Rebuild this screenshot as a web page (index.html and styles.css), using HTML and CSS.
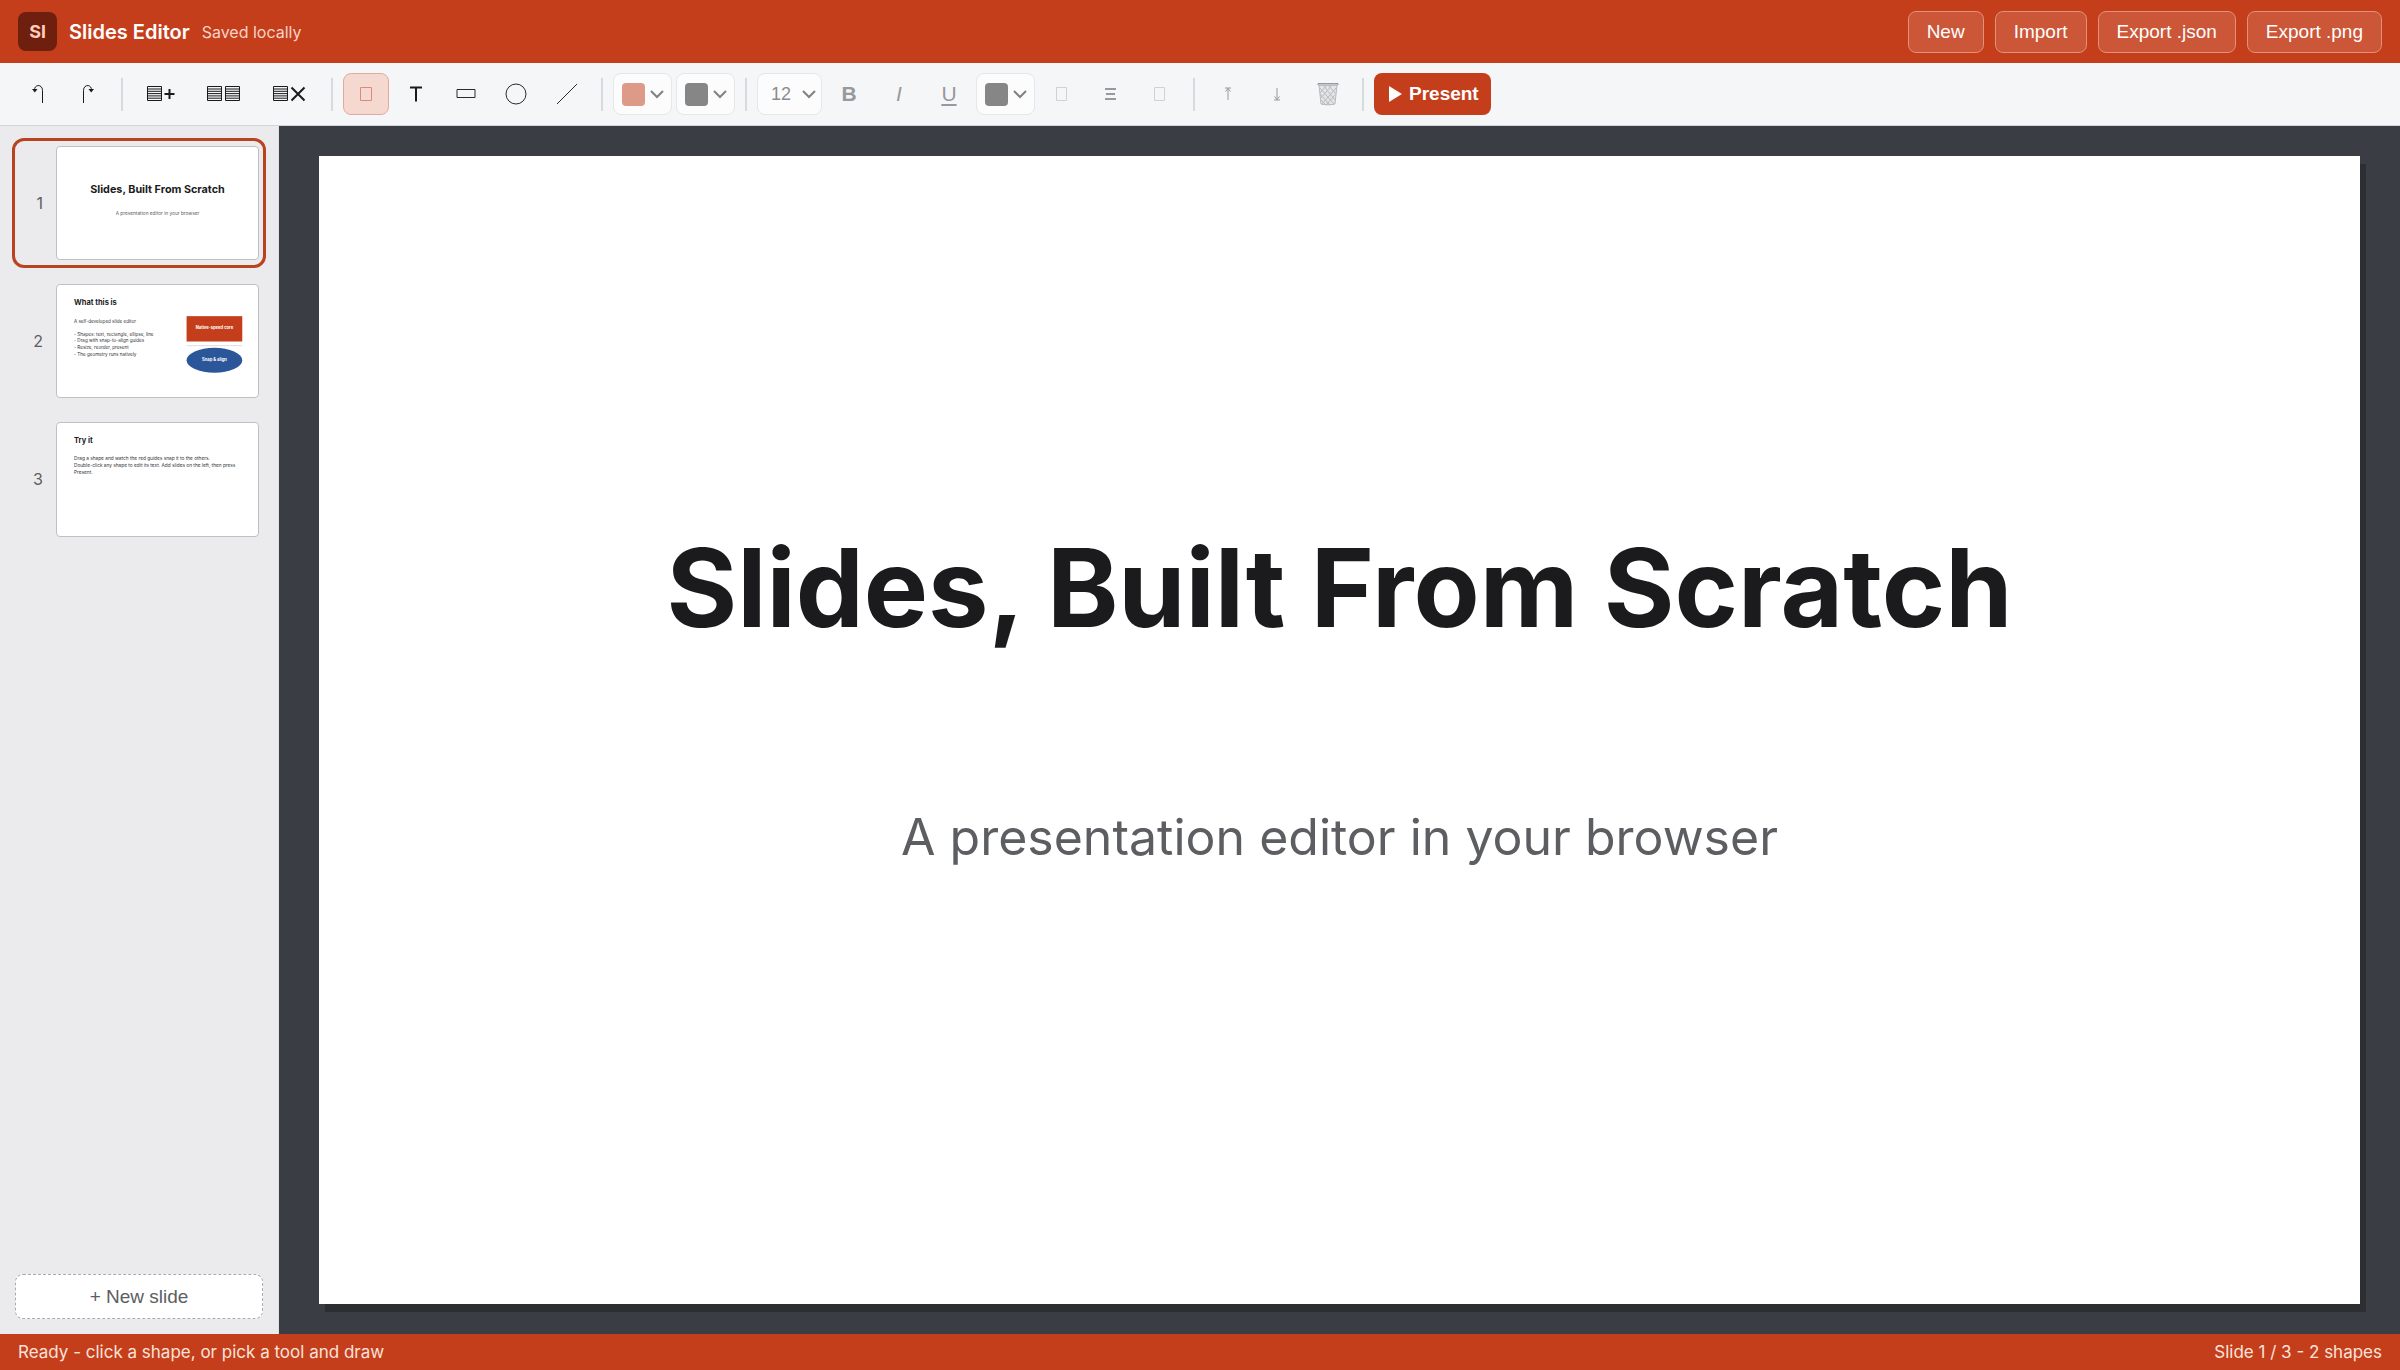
FILE: index.html
```html
<!DOCTYPE html>
<html lang="en">
<head>
<meta charset="utf-8">
<title>Slides Editor</title>
<link rel="stylesheet" href="styles.css">
</head>
<body>
<div class="app">
  <header class="topbar">
    <div class="logo">Sl</div>
    <h1 class="app-name">Slides Editor</h1>
    <span class="save-state">Saved locally</span>
    <div class="file-actions">
      <button class="file-btn" type="button">New</button>
      <button class="file-btn" type="button">Import</button>
      <button class="file-btn" type="button">Export .json</button>
      <button class="file-btn" type="button">Export .png</button>
    </div>
  </header>

  <div class="toolbar" role="toolbar" aria-label="Editing tools">
    <button class="tool" type="button" aria-label="Undo"><svg width="12" height="20" viewBox="0 0 12 20"><path d="M10.500 19V6.500C10.500 0 2.500 0 2.500 6" class="thin"/><path d="M0 5h5.500L2.800 8.500z" class="solid"/></svg></button>
    <button class="tool" type="button" aria-label="Redo"><svg width="12" height="20" viewBox="0 0 12 20"><path d="M1.500 19V6.500C1.500 0 9.500 0 9.500 6" class="thin"/><path d="M12 5H6.500L9.200 8.500z" class="solid"/></svg></button>
    <span class="sep"></span>
    <button class="tool tool-add" type="button" aria-label="Add slide"><svg width="28" height="16" viewBox="0 0 28 16"><path d="M.5 .5h14v14H.5zM.5 3h14M.5 5.300h14M.5 7.600h14M.5 9.900h14M.5 12.200h14" class="thin"/><path d="M17.500 8h10M22.500 3v10" class="bold-line"/></svg></button>
    <button class="tool tool-wide" type="button" aria-label="Duplicate slide"><svg width="34" height="16" viewBox="0 0 34 16"><path d="M.5 .5h14v14H.5zM.5 3h14M.5 5.300h14M.5 7.600h14M.5 9.900h14M.5 12.200h14M18.500 .5h14v14h-14zM18.500 3h14M18.500 5.300h14M18.500 7.600h14M18.500 9.900h14M18.500 12.200h14" class="thin"/></svg></button>
    <button class="tool tool-wide" type="button" aria-label="Delete slide"><svg width="34" height="16" viewBox="0 0 34 16"><path d="M.5 .5h14v14H.5zM.5 3h14M.5 5.300h14M.5 7.600h14M.5 9.900h14M.5 12.200h14" class="thin"/><path d="M18.500 1.500l13 13M31.500 1.500l-13 13" class="bold-line"/></svg></button>
    <span class="sep"></span>
    <button class="tool active" type="button" aria-label="Select" aria-pressed="true"><svg width="12" height="14" viewBox="0 0 12 14"><path d="M.5 .5h11v13H.5z" class="thin"/></svg></button>
    <button class="tool" type="button" aria-label="Text"><svg width="14" height="16" viewBox="0 0 14 16"><path d="M1 1.500h12M7 1.500V15.500" class="text-line"/></svg></button>
    <button class="tool" type="button" aria-label="Rectangle"><svg width="20" height="12" viewBox="0 0 20 12"><path d="M1 1.500h18v8H1z" class="shape"/></svg></button>
    <button class="tool" type="button" aria-label="Ellipse"><svg width="22" height="22" viewBox="0 0 22 22"><circle cx="11" cy="11" r="10" class="shape"/></svg></button>
    <button class="tool tool-line" type="button" aria-label="Line"><svg width="22" height="22" viewBox="0 0 22 22"><path d="M1 21L21 1" class="shape"/></svg></button>
    <span class="sep"></span>
    <button class="picker" type="button" aria-label="Fill colour" aria-haspopup="true"><span class="swatch swatch-fill"></span><svg width="14" height="9" viewBox="0 0 14 9"><path d="M1 1l6 6 6-6" class="chevron"/></svg></button>
    <button class="picker" type="button" aria-label="Line colour" aria-haspopup="true"><span class="swatch"></span><svg width="14" height="9" viewBox="0 0 14 9"><path d="M1 1l6 6 6-6" class="chevron"/></svg></button>
    <span class="sep"></span>
    <label class="size-box">
      <select class="size-select" aria-label="Font size" disabled><option>12</option><option>18</option><option>24</option></select>
      <svg width="14" height="9" viewBox="0 0 14 9"><path d="M1 1l6 6 6-6" class="chevron"/></svg>
    </label>
    <button class="tool off fmt-b" type="button" disabled>B</button>
    <button class="tool off fmt-i" type="button" disabled>I</button>
    <button class="tool off fmt-u" type="button" disabled>U</button>
    <button class="picker" type="button" aria-label="Text colour" aria-haspopup="true"><span class="swatch"></span><svg width="14" height="9" viewBox="0 0 14 9"><path d="M1 1l6 6 6-6" class="chevron"/></svg></button>
    <button class="tool tool-arrow faint" type="button" aria-label="Align left" disabled><svg width="12" height="14" viewBox="0 0 12 14"><path d="M.5 .5h10v13H.5z" class="thin"/></svg></button>
    <button class="tool tool-arrow off" type="button" aria-label="Align centre" disabled><svg width="11" height="12" viewBox="0 0 11 12"><path d="M0 1h11M1 6h9M0 11h11" class="bar-line"/></svg></button>
    <button class="tool faint" type="button" aria-label="Align right" disabled><svg width="12" height="14" viewBox="0 0 12 14"><path d="M.5 .5h10v13H.5z" class="thin"/></svg></button>
    <span class="sep"></span>
    <button class="tool tool-arrow off" type="button" aria-label="Bring to front" disabled><svg width="8" height="14" viewBox="0 0 8 14"><path d="M1 1h6M4 1v12M1.500 4.500L4 1.500l2.500 3" class="thin"/></svg></button>
    <button class="tool off" type="button" aria-label="Send to back" disabled><svg width="8" height="14" viewBox="0 0 8 14"><path d="M1 13h6M4 13V1M1.500 9.500L4 12.500l2.500-3" class="thin"/></svg></button>
    <button class="tool tool-bin off" type="button" aria-label="Delete shape" disabled><svg width="22" height="24" viewBox="0 0 22 24"><path d="M2 3l2 19.500c3 1 11 1 14 0L20 3z" fill="#e3e4e6"/><path d="M1 1.500h20v1.500H1z" class="thin"/><path d="M2 3l2 19c3 1 11 1 14 0l2-19M3 6l14 16M6 3l12 15M11 3l8 9M3 12l10 11M4 18l5 5M19 6L5 22M15 3L4 16M10 3L3 11M18 13L9 23" class="mesh"/></svg></button>
    <span class="sep"></span>
    <button class="present" type="button"><svg width="13" height="16" viewBox="0 0 13 16"><path d="M0 0l13 8-13 8z" class="play"/></svg>Present</button>
  </div>

  <div class="workspace">
    <aside class="sidebar">
      <ol class="slides">
        <li class="slide-row selected"><span class="num">1</span>
          <svg class="thumb" viewBox="0 0 960 540">
            <text x="480" y="223" class="t-cover">Slides, Built From Scratch</text>
            <text x="480" y="329" class="t-sub">A presentation editor in your browser</text>
          </svg></li>
        <li class="slide-row"><span class="num">2</span>
          <svg class="thumb" viewBox="0 0 960 540">
            <text x="78" y="98" class="t-head">What this is</text>
            <text class="t-body"><tspan x="78" y="181">A self-developed slide editor</tspan><tspan x="78" y="244">- Shapes: text, rectangle, ellipse, line</tspan><tspan x="78" y="276">- Drag with snap-to-align guides</tspan><tspan x="78" y="308">- Resize, reorder, present</tspan><tspan x="78" y="340">- The geometry runs natively</tspan></text>
            <rect x="620" y="150" width="268" height="122" fill="#c43e1c"/>
            <text x="754" y="214" class="t-label">Native-speed core</text>
            <path d="M620 292h268" stroke="#d4d6da" stroke-width="4"/>
            <ellipse cx="754" cy="362" rx="134" ry="60" fill="#2b579a"/>
            <text x="754" y="368" class="t-label">Snap &amp; align</text>
          </svg></li>
        <li class="slide-row"><span class="num">3</span>
          <svg class="thumb" viewBox="0 0 960 540">
            <text x="78" y="98" class="t-head">Try it</text>
            <text class="t-body t-para"><tspan x="78" y="179">Drag a shape and watch the red guides snap it to the others.</tspan><tspan x="78" y="212">Double-click any shape to edit its text. Add slides on the left, then press</tspan><tspan x="78" y="246">Present.</tspan></text>
          </svg></li>
      </ol>
      <button class="new-slide" type="button">+ New slide</button>
    </aside>
    <main class="stage">
      <section class="slide">
        <h2 class="slide-title">Slides, Built From Scratch</h2>
        <p class="slide-sub">A presentation editor in your browser</p>
      </section>
    </main>
  </div>

  <footer class="status"><span>Ready - click a shape, or pick a tool and draw</span><span>Slide 1 / 3 - 2 shapes</span></footer>
</div>
</body>
</html>
```
FILE: styles.css
```css
* { box-sizing: border-box; }
body {
  margin: 0;
  font-family: Inter, "Liberation Sans", sans-serif;
  color: #1b1b1d;
}
button, select { font-family: "Liberation Sans", Arial, sans-serif; margin: 0; }
svg { display: block; flex: none; }
.app { display: flex; flex-direction: column; min-height: 100vh; }

/* top bar */
.topbar {
  display: flex;
  align-items: center;
  height: 63px;
  padding: 0 18px;
  background: #c43e1c;
  color: #fff;
}
.logo {
  display: grid;
  place-items: center;
  width: 39px;
  height: 39px;
  margin-right: 12px;
  border-radius: 8px;
  background: #6e1f0e;
  color: #ffcdbb;
  font-size: 18px;
  font-weight: 700;
}
.app-name { margin: 0 12px 0 0; font-size: 20px; font-weight: 600; }
.save-state { color: #f9d3c6; font-size: 16px; }
.file-actions { display: flex; gap: 11px; margin-left: auto; }
.file-btn {
  height: 42px;
  padding: 0 18px;
  border: 1px solid #e48f78;
  border-radius: 8px;
  background: #cc5638;
  color: #fff;
  font-size: 19px;
}

/* toolbar */
.toolbar {
  display: flex;
  align-items: center;
  gap: 4px;
  height: 63px;
  padding: 0 15px;
  background: #f5f6f8;
  border-bottom: 1px solid #d3d5d9;
}
.sep { width: 2px; height: 33px; margin: 0 6px; background: #d8dade; }
.tool {
  display: flex;
  align-items: center;
  justify-content: center;
  width: 46px;
  height: 42px;
  padding: 0;
  border: 1px solid transparent;
  border-radius: 8px;
  background: transparent;
  color: #1b1b1d;
  font-size: 21px;
}
.tool-add { width: 56px; }
.tool-wide { width: 62px; }
.tool-line { width: 48px; }
.tool-bin { width: 48px; }
.tool-arrow { width: 45px; }
.tool.active { background: #f5d8d0; border-color: #e5aa9b; color: #d98a78; }
.tool.off { color: #97999c; }
.tool.faint { color: #cfd1d4; }
.fmt-b { font-weight: 700; }
.fmt-i { font-style: italic; }
.fmt-u { text-decoration: underline; text-underline-offset: 3px; }
.thin { fill: none; stroke: currentColor; stroke-width: 1; }
.solid { fill: currentColor; }
.shape { fill: none; stroke: #2a2a2d; stroke-width: 1; }
.bold-line { fill: none; stroke: currentColor; stroke-width: 2; }
.text-line { fill: none; stroke: currentColor; stroke-width: 2; }
.bar-line { fill: none; stroke: currentColor; stroke-width: 2; }
.mesh { fill: none; stroke: #b9bbbe; stroke-width: 1; }
.chevron { fill: none; stroke: #808184; stroke-width: 2; }
.picker, .size-box {
  display: flex;
  align-items: center;
  justify-content: center;
  gap: 5px;
  height: 42px;
  padding: 0;
  border: 1px solid #e6e7ea;
  border-radius: 8px;
  background: #fcfcfd;
}
.picker { width: 59px; }
.swatch { width: 23px; height: 23px; border-radius: 4px; background: #868686; }
.swatch-fill { background: #dd9a88; }
.size-box { width: 65px; padding: 0 5px 0 8px; gap: 6px; }
.size-select {
  flex: 1;
  min-width: 0;
  padding: 0 0 0 5px;
  border: 0;
  appearance: none;
  background: transparent;
  color: #8b8c8f;
  font-size: 18px;
  opacity: 1;
}
.present {
  display: flex;
  align-items: center;
  justify-content: center;
  gap: 7px;
  height: 42px;
  padding: 0 12px 0 15px;
  border: 0;
  border-radius: 8px;
  background: #c43e1c;
  color: #fff;
  font-size: 19px;
  font-weight: 700;
}
.play { fill: #fff; }

/* slide list */
.workspace { display: flex; flex: 1; }
.sidebar {
  display: flex;
  flex-direction: column;
  flex: none;
  width: 279px;
  padding: 12px 12px 15px;
  background: #ebebee;
  border-right: 1px solid #dfe0e3;
}
.slides { display: flex; flex-direction: column; gap: 8px; margin: 0; padding: 0; list-style: none; }
.slide-row {
  display: flex;
  align-items: center;
  gap: 13px;
  padding: 5px 4px 5px 8px;
  border: 3px solid transparent;
  border-radius: 12px;
}
.slide-row.selected { border-color: #b9431f; }
.num { width: 20px; text-align: right; font-size: 16px; color: #5c5e62; }
.thumb {
  flex: 1;
  min-width: 0;
  aspect-ratio: 16 / 9;
  border: 1px solid #bfc0c4;
  border-radius: 4px;
  background: #fff;
}
.t-cover { font-size: 52px; font-weight: 700; text-anchor: middle; fill: #1b1b1d; }
.t-sub { font-size: 23px; text-anchor: middle; fill: #5c5e62; }
.t-head { font-size: 36px; font-weight: 700; fill: #1b1b1d; }
.t-body { font-size: 22px; fill: #333538; }
.t-para { font-size: 23px; }
.t-label { font-size: 20px; font-weight: 700; text-anchor: middle; fill: #fff; }
.new-slide {
  height: 45px;
  margin: auto 3px 0;
  border: 1px dashed #a9abaf;
  border-radius: 8px;
  background: #fff;
  color: #5c5e62;
  font-size: 19px;
}

/* canvas */
.stage {
  display: flex;
  align-items: center;
  flex: 1;
  min-width: 0;
  padding: 0 40px;
  background: #3a3d43;
}
.slide {
  display: flex;
  flex-direction: column;
  align-items: center;
  justify-content: center;
  gap: 144px;
  width: 100%;
  aspect-ratio: 16 / 9;
  padding-bottom: 70px;
  background: #fff;
  box-shadow: 6px 8px 0 #2c2e31;
}
.slide-title { margin: 0; font-size: 108px; font-weight: 700; line-height: 140px; }
.slide-sub { margin: 0; font-size: 50px; line-height: 70px; color: #5c5e62; }

.status {
  display: flex;
  align-items: center;
  justify-content: space-between;
  height: 36px;
  padding: 0 18px;
  background: #c43e1c;
  color: #fbe3da;
  font-size: 17px;
}
```
